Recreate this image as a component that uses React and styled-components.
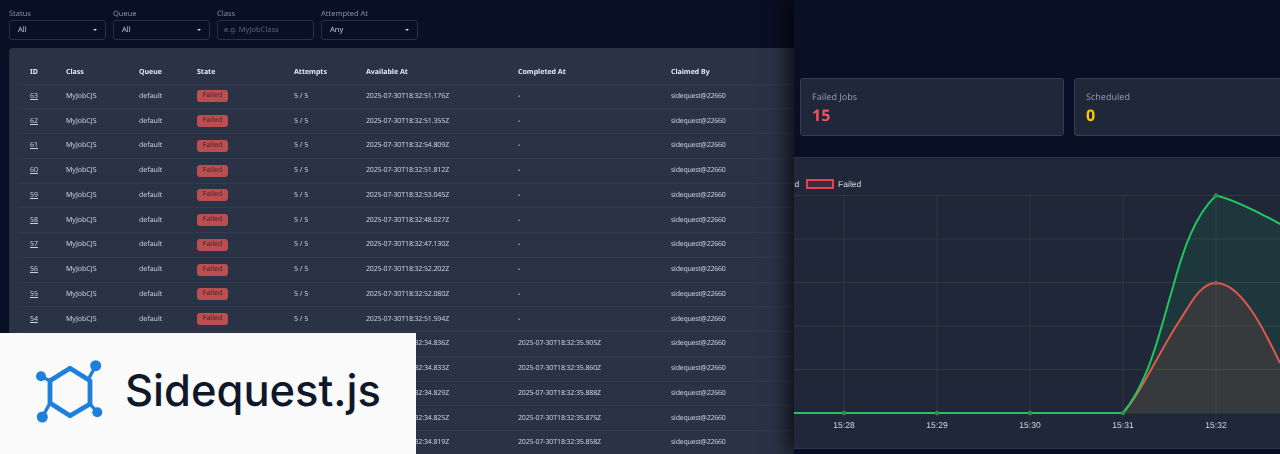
import React from "react";
import styled, { createGlobalStyle } from "styled-components";

const GlobalStyle = createGlobalStyle`
    html, body {
        margin: 0;
        padding: 0;
        background-color: #090f24;
    }
`;

const MainWrapper = styled.div`
    position: relative;
    width: 1280px;
    height: 454px;
    display: flex;
    overflow: hidden;
    background-color: #090f24;
    font-family: "Noto Sans", sans-serif;
    text-rendering: geometricPrecision;
`;

const JobsPanel = styled.div`
    width: 794px;
    flex-shrink: 0;
    box-sizing: border-box;
    padding: 9px 0 0 9px;
    overflow: hidden;
    will-change: transform;
`;

const FilterRow = styled.div`
    display: flex;
    gap: 7px;
`;

const FilterGroup = styled.div`
    width: 97px;
    display: flex;
    flex-direction: column;
`;

const FilterLabel = styled.div`
    height: 11px;
    line-height: 10px;
    font-size: 7.5px;
    color: #8390a6;
`;

const FilterBox = styled.div`
    height: 20px;
    box-sizing: border-box;
    display: flex;
    align-items: center;
    justify-content: space-between;
    padding: 0 8px;
    border: 1px solid #283246;
    border-radius: 3px;
    font-size: 7.5px;
    color: ${(props) => (props.$placeholder ? "#5c677d" : "#c9d2e0")};
    padding-left: ${(props) => (props.$placeholder ? "6px" : "8px")};
`;

const Caret = styled.span`
    width: 0;
    height: 0;
    border-left: 2px solid transparent;
    border-right: 2px solid transparent;
    border-top: 2px solid #c9d2e0;
`;

const TableCard = styled.div`
    width: 830px;
    margin-top: 8px;
    box-sizing: border-box;
    padding: 13px 12px 0 12px;
    border-radius: 4px;
    background-color: #2a3346;
`;

const JobsTable = styled.table`
    width: 806px;
    table-layout: fixed;
    border-collapse: collapse;
    font-size: 7px;
    color: #c9cfd9;
`;

const HeadCell = styled.th`
    box-sizing: border-box;
    height: 23px;
    padding: 0 0 0 9px;
    text-align: left;
    font-weight: 700;
    color: #e6ebf3;
    border-bottom: 1px solid #323c50;
    width: ${(props) => props.$width}px;
`;

const Row = styled.tr`
    height: 24.75px;
    border-bottom: 1px solid #323c50;
`;

const Cell = styled.td`
    padding: 0 0 0 9px;
    white-space: nowrap;
    letter-spacing: ${(props) => props.$tight || 0}px;
`;

const IdLink = styled.span`
    text-decoration: underline;
`;

const Badge = styled.span`
    display: inline-block;
    width: 31px;
    height: 12px;
    line-height: 12px;
    text-align: center;
    border-radius: 3px;
    background-color: #b94f50;
    color: #4f2027;
`;

const StatsPanel = styled.div`
    position: relative;
    flex: 1;
    min-width: 0;
    padding-top: 78px;
    overflow: hidden;
    background-color: #090f24;
    box-shadow: -6px 0 20px rgba(0, 0, 0, 0.75);
`;

const StatRow = styled.div`
    display: flex;
    gap: 10px;
    padding-left: 6px;
`;

const StatCard = styled.div`
    width: 264px;
    height: 58px;
    flex-shrink: 0;
    box-sizing: border-box;
    padding: 10px 11px 0 11px;
    border: 1px solid #343e52;
    border-radius: 3px;
    background-color: #1f2739;
`;

const StatLabel = styled.div`
    height: 15px;
    line-height: 15px;
    font-size: 9px;
    color: #8e98aa;
`;

const StatValue = styled.div`
    height: 22px;
    line-height: 22px;
    font-size: 16px;
    font-weight: 700;
    color: ${(props) => props.$color};
`;

const ChartCard = styled.div`
    height: 292px;
    margin-top: 21px;
    box-sizing: border-box;
    overflow: hidden;
    border-top: 1px solid #2b3447;
    border-bottom: 1px solid #2b3447;
    background-color: #1f2739;
`;

const Legend = styled.div`
    display: flex;
    align-items: center;
    gap: 4px;
    height: 10px;
    margin: 21px 0 0 -36px;
    font-family: "Liberation Sans", sans-serif;
    font-size: 8.5px;
    color: #d5d9e0;
`;

const LegendSwatch = styled.span`
    width: 28px;
    height: 10px;
    flex-shrink: 0;
    box-sizing: border-box;
    margin-left: 3px;
    border: 2px solid #e8434f;
    background-color: #3a2a3c;
`;

const ChartSvg = styled.svg`
    display: block;
    margin-top: 3px;
`;

const AxisLabel = styled.text`
    font-family: "Liberation Sans", sans-serif;
    font-size: 8.5px;
    fill: #d5d9e0;
    text-anchor: middle;
`;

const LogoCard = styled.div`
    position: absolute;
    left: 0;
    bottom: 0;
    width: 416px;
    height: 121px;
    box-sizing: border-box;
    display: flex;
    align-items: center;
    gap: 20px;
    padding: 0 0 5px 35px;
    background-color: #fafafa;
`;

const LogoMark = styled.svg`
    flex-shrink: 0;
    overflow: visible;
`;

const LogoText = styled.div`
    font-family: Inter, sans-serif;
    font-size: 43.5px;
    font-weight: 550;
    color: #0f172a;
`;

const jobs = [
    [63, "51.176", null],
    [62, "51.355", null],
    [61, "54.809", null],
    [60, "51.812", null],
    [59, "53.045", null],
    [58, "48.027", null],
    [57, "47.130", null],
    [56, "52.202", null],
    [55, "52.080", null],
    [54, "51.594", null],
    [53, "34.836", "35.905"],
    [52, "34.833", "35.860"],
    [51, "34.829", "35.888"],
    [50, "34.825", "35.875"],
    [49, "34.819", "35.858"],
];

const columns = [
    ["ID", 36],
    ["Class", 73],
    ["Queue", 58],
    ["State", 97],
    ["Attempts", 72],
    ["Available At", 152],
    ["Completed At", 153],
    ["Claimed By", 165],
];

const filters = [
    ["Status", "All"],
    ["Queue", "All"],
    ["Class", "e.g. MyJobClass", true],
    ["Attempted At", "Any"],
];

const ticks = [
    ["15:28", 50],
    ["15:29", 143],
    ["15:30", 236],
    ["15:31", 329],
    ["15:32", 422],
];

// chart coordinates are relative to the svg (x - 794, y - 192)
const gridY = [3.5, 47, 90.5, 134, 177.5, 221];
const greenLine = "M329,221 C356,188 366,138 379,95 C389,58 401,23 422,3.5 C441,8 466,21 486,32";
const redLine = "M329,221 C346,203 366,158 386,128 C396,113 406,91 422,91 C446,91 468,133 486,171";

const App = () => {
    return (
        <MainWrapper>
            <GlobalStyle />
            <JobsPanel>
                <FilterRow>
                    {filters.map(([label, value, placeholder]) => (
                        <FilterGroup key={label}>
                            <FilterLabel>{label}</FilterLabel>
                            <FilterBox $placeholder={placeholder}>
                                {value}
                                {!placeholder && <Caret />}
                            </FilterBox>
                        </FilterGroup>
                    ))}
                </FilterRow>
                <TableCard>
                    <JobsTable>
                        <thead>
                            <tr>
                                {columns.map(([name, width]) => (
                                    <HeadCell key={name} $width={width}>{name}</HeadCell>
                                ))}
                            </tr>
                        </thead>
                        <tbody>
                            {jobs.map(([id, available, completed]) => (
                                <Row key={id}>
                                    <Cell><IdLink>{id}</IdLink></Cell>
                                    <Cell>MyJobCJS</Cell>
                                    <Cell>default</Cell>
                                    <Cell><Badge>Failed</Badge></Cell>
                                    <Cell>5 / 5</Cell>
                                    <Cell $tight={-0.13}>2025-07-30T18:32:{available}Z</Cell>
                                    <Cell $tight={-0.13}>{completed ? `2025-07-30T18:32:${completed}Z` : "-"}</Cell>
                                    <Cell $tight={-0.25}>sidequest@22660</Cell>
                                </Row>
                            ))}
                        </tbody>
                    </JobsTable>
                </TableCard>
            </JobsPanel>

            <StatsPanel>
                <StatRow>
                    <StatCard>
                        <StatLabel>Failed Jobs</StatLabel>
                        <StatValue $color="#f0525f">15</StatValue>
                    </StatCard>
                    <StatCard>
                        <StatLabel>Scheduled</StatLabel>
                        <StatValue $color="#fdc800">0</StatValue>
                    </StatCard>
                </StatRow>
                <ChartCard>
                    <Legend>
                        <span>Completed</span>
                        <LegendSwatch />
                        <span>Failed</span>
                    </Legend>
                    <ChartSvg width="486" height="258" viewBox="0 0 486 258">
                        {gridY.map((y) => (
                            <line key={y} x1="0" x2="486" y1={y} y2={y} stroke="#2f3a3c" strokeWidth="1" />
                        ))}
                        {[50, 143, 236, 329, 422].map((x) => (
                            <line key={x} x1={x} x2={x} y1="3.5" y2="226" stroke="#2f3a3c" strokeWidth="1" />
                        ))}
                        <path d={`${greenLine} L486,221 Z`} fill="rgba(34,197,94,0.1)" />
                        <path d={`${redLine} L486,221 Z`} fill="rgba(239,80,60,0.12)" />
                        <path d={redLine} fill="none" stroke="#e2574c" strokeWidth="2" />
                        <path d={greenLine} fill="none" stroke="#22c55e" strokeWidth="2" />
                        <line x1="0" x2="329" y1="221" y2="221" stroke="#22c55e" strokeWidth="2" />
                        {[50, 143, 236, 329].map((x) => (
                            <circle key={x} cx={x} cy="221" r="2.2" fill="#2f8f50" />
                        ))}
                        <circle cx="422" cy="3.5" r="2.2" fill="#2f8f50" />
                        <circle cx="422" cy="91" r="2.2" fill="#a8504b" />
                        {ticks.map(([label, x]) => (
                            <AxisLabel key={label} x={x} y="236">{label}</AxisLabel>
                        ))}
                    </ChartSvg>
                </ChartCard>
            </StatsPanel>

            <LogoCard>
                <LogoMark width="70" height="62" viewBox="0 0 70 62">
                    <g stroke="#1f7fdc" fill="none">
                        <path d="M35,8.3 L55,20.7 L55,44 L35,55.7 L15,43 L15,20.7 Z" strokeWidth="4.8" strokeLinejoin="round" />
                        <path d="M53,20 L60,7M15,20.7 L7,17M15,43 L8,56M55,44 L62,52" strokeWidth="3.4" />
                    </g>
                    <g fill="#1f7fdc">
                        <circle cx="60.7" cy="5.7" r="5.5" />
                        <circle cx="6" cy="16.3" r="5" />
                        <circle cx="7.3" cy="57" r="5.5" />
                        <circle cx="62.3" cy="52.3" r="5" />
                    </g>
                </LogoMark>
                <LogoText>Sidequest.js</LogoText>
            </LogoCard>
        </MainWrapper>
    );
};

export default App;
